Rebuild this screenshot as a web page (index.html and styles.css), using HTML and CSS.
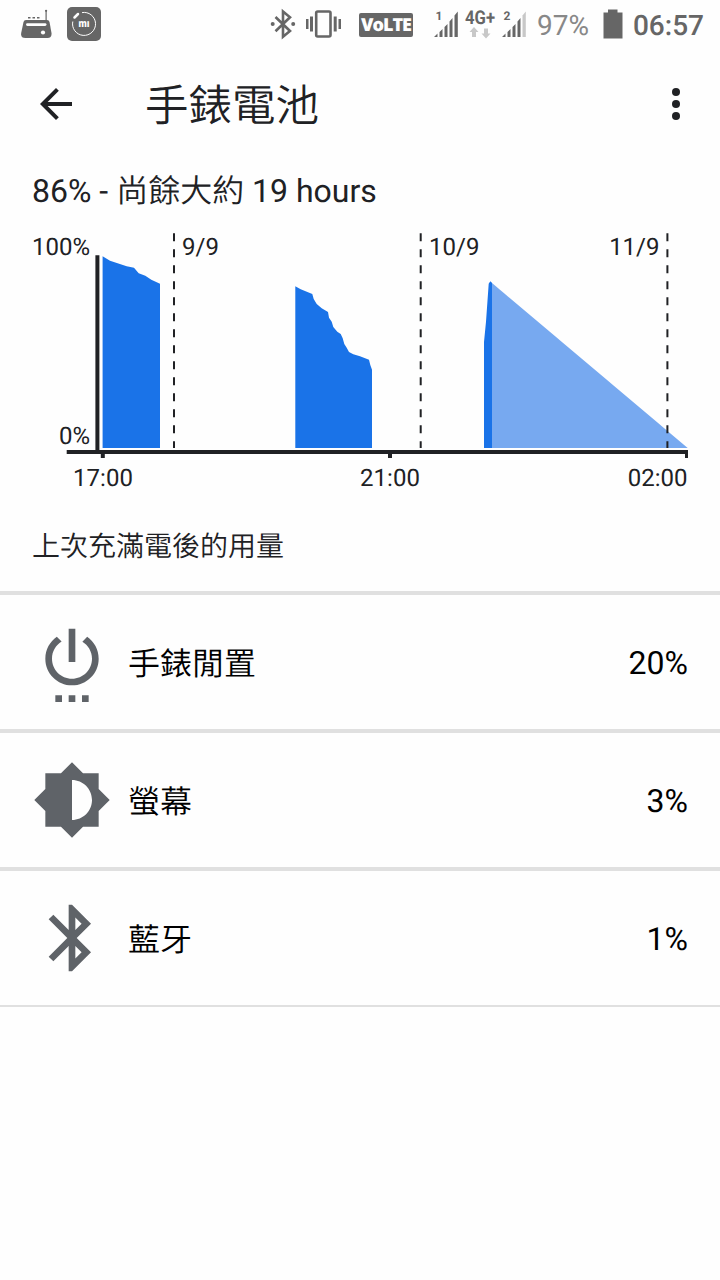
FILE: index.html
```html
<!DOCTYPE html>
<html lang="zh-Hant">
    <head>
        <meta charset="UTF-8">
        <meta name="viewport" content="width=device-width, initial-scale=1.0">
        <title>手錶電池</title>
        <link rel="stylesheet" href="styles.css">
    </head>
    <body>
        <div class="status-bar">
            <div class="notifications">
                <svg class="radio" width="34" height="50" viewBox="0 0 34 50">
                    <path d="M6 20h21q2 0 2.500 2l2 11q.5 5-4 5h-22q-5 0-4.300-5l2.300-11q.5-2 2.500-2z"/>
                    <path d="M8 17h2.500v1.500H8zM12.500 17H15v1.500h-2.500zM17 17h2.500v1.500H17zM25.500 10h1.200v11h-1.200z"/>
                    <circle cx="26.100" cy="10.800" r="1.100"/>
                    <rect class="cut" x="6" y="23.200" width="20.500" height="2.800" rx="1.400"/>
                    <circle class="cut" cx="23" cy="32.500" r="2.100"/>
                </svg>
                <svg class="mi" width="34" height="50" viewBox="0 0 34 50">
                    <rect x="0" y="7" width="34" height="34" rx="5"/>
                    <path class="ring" d="M15 12.600A11.500 11.500 0 1 1 5.800 21.500"/>
                    <path class="knob" d="M7.500 17.500l3.500-3.500"/>
                    <text x="11.500" y="27.300" textLength="11" lengthAdjust="spacingAndGlyphs">mı</text>
                </svg>
            </div>
            <div class="indicators">
                <svg class="bt" width="26" height="50" viewBox="0 0 26 50">
                    <path class="line" d="M5.500 17l14.500 14-7 5.800V11.500l7 5.800-14.500 14"/>
                    <circle cx="2.700" cy="24" r="2"/>
                    <circle cx="23.200" cy="24" r="2"/>
                </svg>
                <svg class="vibrate" width="37" height="50" viewBox="0 0 37 50">
                    <rect class="line" x="11.200" y="11.500" width="14.300" height="25" rx="1.500"/>
                    <path d="M1 19h2.500v10H1zM5 16.500h3v15H5zM28.700 16.500h3v15h-3zM33.500 19H36v10h-2.500z"/>
                </svg>
                <div class="volte">VoLTE</div>
                <svg class="signal" width="25" height="50" viewBox="0 0 25 50">
                    <text x="1.500" y="20" class="sim">1</text>
                    <path d="M0 37l3.500-3.500V37zM5.500 32l3-3V37h-3zM10.500 27l3-3V37h-3zM15.500 21.500l3-3.500V37h-3zM20.500 15.500l3.300-4V37h-3.300z"/>
                </svg>
                <svg class="network" width="34" height="50" viewBox="-1 0 34 50">
                    <text x="0" y="24" textLength="30" lengthAdjust="spacingAndGlyphs">4G+</text>
                    <path d="M9 27l4.500 5H11v5H7v-5H4.500zM21 38.500l-4.500-5H19v-5h4v5h2.500z"/>
                </svg>
                <svg class="signal second" width="25" height="50" viewBox="0 0 25 50">
                    <text x="1.500" y="20" class="sim">2</text>
                    <path d="M0 37l3.500-3.500V37zM5.500 32l3-3V37h-3zM10.500 27l3-3V37h-3zM15.500 21.500l3-3.500V37h-3z"/>
                    <path class="weak" d="M20.500 15.500l3.300-4V37h-3.300z"/>
                </svg>
                <span class="percent">97%</span>
                <svg class="battery" width="20" height="50" viewBox="0 0 20 50">
                    <path d="M5 9.500h9.500v3H19.500v26H.5v-26H5z"/>
                </svg>
                <span class="time">06:57</span>
            </div>
        </div>

        <div class="header">
            <svg width="48" height="48" viewBox="0 0 24 24">
                <path d="M20 11H7.830l5.590-5.590L12 4l-8 8 8 8 1.410-1.410L7.830 13H20z"/>
            </svg>
            <h1>手錶電池</h1>
            <svg width="48" height="48" viewBox="0 0 24 24">
                <circle cx="12" cy="6" r="2"/>
                <circle cx="12" cy="12" r="2"/>
                <circle cx="12" cy="18" r="2"/>
            </svg>
        </div>

        <div class="summary">86% - <span class="cjk">尚餘大約</span> 19 hours</div>

        <svg class="chart" width="720" height="270" viewBox="0 0 720 270">
            <!-- recorded levels -->
            <path class="level" d="M102.600 223V31.200L110 35.700 126.700 41.300 134 42.700 138.700 48.300 145.300 50.700 151.300 54.700 160 58.700V223z"/>
            <path class="level" d="M295.300 223V61.300L300.700 64.300 312.300 69 313.700 74 316.700 79 321.700 83.300 328 87 329 92.700 331.700 96.700 333.300 102 337.300 106.700 340.700 109 342.700 113.300 344.300 119 346.700 122.700 349 127 353.300 129.300 360 131.300 369 134.700 370.300 140 372 144.700V223z"/>
            <!-- projection -->
            <path class="projected" d="M491 223V57.300L492 58 687.700 223z"/>
            <path class="level" d="M484 223V117L486 96.700 488.700 58.700 490.300 56.300 492 58V223z"/>
            <!-- axes -->
            <path class="axis" d="M97.400 30.300V227M66.700 227H688"/>
            <path class="axis" d="M102.800 227v6M390 227v6"/>
            <path class="axis thin" d="M686.500 227v6"/>
            <path class="day" d="M174 8.300V223M420.700 8.300V223M667.400 8.300V223"/>
            <g class="labels">
                <text x="90" y="30" text-anchor="end">100%</text>
                <text x="90" y="219" text-anchor="end">0%</text>
                <text x="182" y="30">9/9</text>
                <text x="429" y="30">10/9</text>
                <text x="659.500" y="30" text-anchor="end">11/9</text>
                <text x="103" y="261" text-anchor="middle">17:00</text>
                <text x="390" y="261" text-anchor="middle">21:00</text>
                <text x="687.500" y="261" text-anchor="end">02:00</text>
            </g>
        </svg>

        <h2>上次充滿電後的用量</h2>

        <div class="usage">
            <div class="row">
                <svg width="80" height="80" viewBox="0 0 24 24">
                    <path d="M7 24h2v-2H7v2zm4 0h2v-2h-2v2zm2-22h-2v10h2V2zm3.560 2.440l-1.450 1.450C16.840 6.940 18 8.830 18 11c0 3.310-2.690 6-6 6s-6-2.690-6-6c0-2.170 1.160-4.060 2.880-5.120L7.440 4.440C5.360 5.880 4 8.280 4 11c0 4.420 3.580 8 8 8s8-3.580 8-8c0-2.720-1.360-5.120-3.440-6.560zM15 24h2v-2h-2v2z"/>
                </svg>
                <span class="name">手錶閒置</span>
                <span class="value">20%</span>
            </div>
            <div class="row">
                <svg width="80" height="80" viewBox="0 0 24 24">
                    <path d="M20 15.310L23.310 12 20 8.690V4h-4.690L12 .690 8.690 4H4v4.690L.690 12 4 15.310V20h4.690L12 23.310 15.310 20H20v-4.690zM12 18V6c3.310 0 6 2.690 6 6s-2.690 6-6 6z"/>
                </svg>
                <span class="name">螢幕</span>
                <span class="value">3%</span>
            </div>
            <div class="row">
                <svg width="80" height="80" viewBox="0 0 24 24">
                    <path d="M17.710 7.710L12 2h-1v7.590L6.410 5 5 6.410 10.590 12 5 17.590 6.410 19 11 14.410V22h1l5.710-5.710-4.300-4.290 4.300-4.290zM13 5.830l1.880 1.880L13 9.590V5.830zm1.880 10.460L13 18.170v-3.760l1.880 1.880z"/>
                </svg>
                <span class="name">藍牙</span>
                <span class="value">1%</span>
            </div>
        </div>
    </body>
</html>
```

FILE: styles.css
```css
:root {
    --ink: #202124;
    --status: #666;
    --blue: #1a73e8;
    --line: #e0e0e0;
}

body {
    margin: 0;
    background: #fefefe;
    color: var(--ink);
    font-family: Roboto, "Noto Sans CJK TC", sans-serif;
    text-rendering: geometricPrecision;
    overflow: hidden;
}

svg {
    display: block;
    flex: none;
}

/* Status bar */
.status-bar {
    display: flex;
    justify-content: space-between;
    height: 50px;
    padding: 0 16px 0 20px;
    color: var(--status);
    fill: var(--status);
}

.notifications, .indicators {
    display: flex;
    align-items: center;
}

.notifications {
    gap: 13px;
}

.cut {
    fill: #fefefe;
}

.ring, .knob {
    fill: none;
    stroke: #fefefe;
    stroke-width: 1;
}

.knob {
    stroke-width: 2.5;
    stroke-linecap: round;
}

.mi text {
    fill: #fefefe;
    font-size: 11px;
    font-weight: 900;
}

.line {
    fill: none;
    stroke: var(--status);
    stroke-width: 2.6;
}

.vibrate {
    margin-left: 9px;
}

.volte {
    width: 54px;
    height: 24px;
    margin: -1px 21px 0 17px;
    border-radius: 2px;
    background: var(--status);
    color: #fefefe;
    font: 800 18px/25px "Open Sans", sans-serif;
    letter-spacing: -1px;
    text-align: center;
}

.sim {
    font-size: 12px;
    font-weight: 700;
}

.network {
    margin: 0 4px 0 5px;
}

.network text {
    font-size: 19px;
    font-weight: 700;
}

.network path, .weak {
    fill: #c8c8c8;
}

.percent, .time {
    font-size: 28px;
    line-height: 50px;
    padding-top: 1px;
}

.percent {
    margin: 0 14px 0 10px;
    color: #888;
}

.time {
    margin-left: 10px;
    font-weight: 500;
}

/* Title */
.header {
    display: flex;
    align-items: center;
    height: 108px;
    padding: 0 20px 0 32px;
    fill: var(--ink);
}

h1 {
    flex: 1;
    margin: 5px 0 0 65px;
    font-size: 43.5px;
    font-weight: 350;
    line-height: 60px;
}

.summary {
    padding-left: 32px;
    font-size: 32px;
    line-height: 66px;
    height: 67px;
}

.cjk {
    font-weight: 350;
}

/* Battery graph */
.level, .projected {
    fill: var(--blue);
}

.projected {
    fill: #77a9f0;
}

.axis {
    fill: none;
    stroke: var(--ink);
    stroke-width: 4;
}

.thin {
    stroke-width: 3;
}

.day {
    stroke: var(--ink);
    stroke-width: 2;
    stroke-dasharray: 8 8;
}

.labels {
    font-size: 24px;
    fill: var(--ink);
}

h2 {
    height: 96px;
    margin: 0;
    padding-left: 32px;
    font-size: 28px;
    font-weight: 350;
    line-height: 103px;
}

/* Usage list */
.usage {
    border-bottom: 2px solid var(--line);
}

.row {
    display: flex;
    align-items: center;
    height: 134px;
    padding: 0 32px;
    border-top: 4px solid var(--line);
    color: #000;
    font-size: 32px;
    fill: #5f6368;
}

.row svg {
    margin-bottom: 1px;
}

.name {
    flex: 1;
    margin-left: 16px;
    font-weight: 350;
}

.value {
    padding-top: 2px;
}
```
